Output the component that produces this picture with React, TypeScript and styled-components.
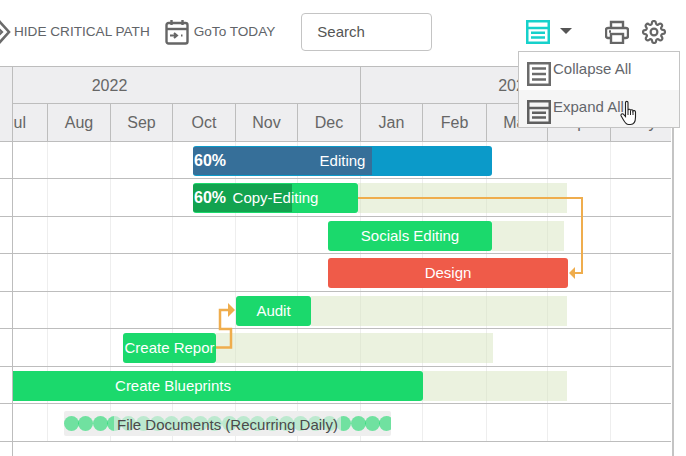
import React from 'react';
import styled, { createGlobalStyle } from 'styled-components';

const MONTHS = ['Jul', 'Aug', 'Sep', 'Oct', 'Nov', 'Dec', 'Jan', 'Feb', 'Mar', 'Apr', 'May'];
const COLUMNS = '35px 63px 62px 63px 62px 63px 62px 64px 61px 63px 61px';

const GlobalStyle = createGlobalStyle`
  html, body {
    margin: 0;
    padding: 0;
    background: #fff;
    overflow: hidden;
    font-family: "Liberation Sans", Arial, sans-serif;
  }
`;

const Page = styled.div`
  position: relative;
  width: 686px;
  height: 456px;
  overflow: hidden;
`;

const Toolbar = styled.div`
  display: flex;
  align-items: center;
  height: 64px;
  margin-left: -11px;
  color: #666;
`;

const ToolLabel = styled.span<{ $gap: number }>`
  font-size: 13.6px;
  margin: 0 15px 2px ${(p) => p.$gap}px;
  color: #616468;
  white-space: nowrap;
`;

const SearchBox = styled.div`
  box-sizing: border-box;
  display: flex;
  align-items: center;
  flex: none;
  width: 131px;
  height: 38px;
  margin-left: 11px;
  margin-right: 94px;
  padding: 0 0 2px 15px;
  border: 1px solid #c4c4c4;
  border-radius: 4px;
  font-size: 15px;
  color: #555;
`;

const Caret = styled.span`
  width: 0;
  height: 0;
  margin: 0 33px 2px 10px;
  border-left: 6px solid transparent;
  border-right: 6px solid transparent;
  border-top: 6px solid #555;
`;

const IconGap = styled.span`
  display: inline-flex;
  margin-right: 13px;
`;

const Chart = styled.div`
  position: relative;
  width: 674px;
  height: 390px;
  border-right: 2px solid #c4c4c4;
  box-sizing: border-box;
  margin-top: 2px;
`;

const HeaderBlock = styled.div`
  background: #eeeef0;
  border-top: 1px solid #bdbdbd;
  width: 671px;
  box-sizing: border-box;
  padding-left: 12px;
  color: #666;
`;

const YearRow = styled.div`
  display: grid;
  grid-template-columns: 347px 1fr;
  height: 36px;
  border-left: 1px solid #bdbdbd;
  border-bottom: 1px solid #bdbdbd;
`;

const YearCell = styled.div<{ $shift?: number }>`
  display: flex;
  align-items: center;
  justify-content: center;
  font-size: 16px;
  padding-top: 2px;
  padding-right: ${(p) => p.$shift || 0}px;

  & + & {
    border-left: 1px solid #bdbdbd;
  }
`;

const MonthRow = styled.div`
  display: grid;
  grid-template-columns: ${COLUMNS};
  height: 37px;
  border-left: 1px solid #bdbdbd;
`;

const MonthCell = styled.div`
  display: flex;
  align-items: center;
  justify-content: center;
  overflow: hidden;
  font-size: 16px;
  box-sizing: border-box;
  border-right: 1px solid #bdbdbd;

  &:first-child {
    justify-content: flex-end;
    padding-right: 21px;
  }
  &:last-child {
    border-right: 0;
  }
`;

const Rows = styled.div`
  position: relative;
  width: 671px;
  border-top: 1px solid #bdbdbd;
`;

const Row = styled.div`
  position: relative;
  box-sizing: border-box;
  height: 37px;
  padding-left: 12px;
  border-bottom: 1px solid #bdbdbd;

  &:nth-child(even) {
    height: 38px;
  }
`;

const RowGrid = styled.div`
  display: grid;
  grid-template-columns: ${COLUMNS};
  height: 100%;
  border-left: 1px solid #bdbdbd;
`;

const GridCell = styled.div`
  box-sizing: border-box;
  border-right: 1px solid #eeeeee;
  &:last-child {
    border-right: 0;
  }
`;

const LeftRule = styled.div`
  height: 15px;
  margin-left: 12px;
  border-left: 1px solid #bdbdbd;
`;

const Baseline = styled.div`
  position: absolute;
  top: 4px;
  height: 30px;
  background: rgba(214, 228, 188, 0.48);
`;

const Bar = styled.div<{ $color: string; $clipped?: boolean }>`
  position: absolute;
  top: 4px;
  box-sizing: border-box;
  height: 30px;
  display: flex;
  align-items: center;
  justify-content: center;
  border-radius: ${(p) => (p.$clipped ? '0 3px 3px 0' : '3px')};
  padding-right: ${(p) => (p.$clipped ? '90px' : '0')};
  background: ${(p) => p.$color};
  color: #fff;
  font-size: 15px;
  overflow: hidden;
  white-space: nowrap;
`;

const Progress = styled.div<{ $color: string }>`
  position: absolute;
  left: 0;
  top: 1px;
  bottom: 1px;
  background: ${(p) => p.$color};
  border-radius: 2px 0 0 2px;
`;

const Percent = styled.span`
  position: absolute;
  left: 1px;
  top: 6px;
  font-size: 16px;
  font-weight: 700;
  line-height: 18px;
`;

const BarText = styled.span`
  position: relative;
  top: -1px;
`;

const Recurring = styled.div`
  position: absolute;
  top: 7px;
  left: 64px;
  width: 327px;
  height: 25px;
  border-radius: 2px;
  background: #eeeeee;
  display: flex;
  align-items: center;
  overflow: hidden;
`;

const Dot = styled.span`
  flex: none;
  width: 15px;
  height: 15px;
  margin-right: -0.68px;
  border-radius: 50%;
  background: rgba(28, 217, 108, 0.6);
`;

const RecurringLabel = styled.span`
  position: absolute;
  left: 50px;
  top: 0;
  bottom: 0;
  display: flex;
  align-items: center;
  padding: 2px 3px 0;
  background: rgba(238, 238, 238, 0.6);
  font-size: 15px;
  color: #4a4a4a;
  white-space: nowrap;
`;

const Links = styled.svg`
  position: absolute;
  left: 0;
  top: 0;
  pointer-events: none;
`;

const Menu = styled.div`
  position: absolute;
  left: 518px;
  top: 51px;
  box-sizing: border-box;
  width: 162px;
  height: 77px;
  background: #fff;
  border: 1px solid #c4c4c4;
`;

const MenuItem = styled.div<{ $hover?: boolean }>`
  display: flex;
  height: 37.5px;
  padding: 10px 0 0 8px;
  box-sizing: border-box;
  gap: 2px;
  font-size: 15px;
  color: #63666b;
  background: ${(p) => (p.$hover ? '#f5f5f5' : 'transparent')};
`;

const MenuLabel = styled.span`
  margin-top: -2px;
  line-height: 18px;
`;

const CursorHand = styled.svg`
  position: absolute;
  left: 620px;
  top: 100px;
`;

// toolbar + menu icons, traced from the screenshot
const DiamondIcon = () => (
  <svg width="22" height="24" viewBox="0 0 22 24" fill="none" stroke="#6b6b6b" strokeWidth="2.6" style={{ flex: 'none' }}>
    <path d="M11 2 L20 12 L11 22 L2 12 Z" />
    <path d="M9 8 L13 12 L9 16" strokeWidth="2.2" />
  </svg>
);

const CalendarIcon = () => (
  <svg width="24" height="26" viewBox="0 0 24 26" fill="none" stroke="#666" strokeWidth="2.4" style={{ flex: 'none' }}>
    <rect x="1.5" y="4" width="21" height="20.5" rx="2" />
    <path d="M1.5 10 H22.5" />
    <path d="M6.5 1 V6 M17.5 1 V6" />
    <path d="M5 16.5 H11.5 M9 14 L12 16.5 L9 19" strokeWidth="2" />
    <path d="M16 16.5 H17.5" strokeWidth="2" />
  </svg>
);

const ExpandIcon = ({ color = '#16d1cb' }: { color?: string }) => (
  <svg width="24" height="24" viewBox="0 0 24 24" fill="none" stroke={color} strokeWidth="2.5" style={{ flex: 'none' }}>
    <rect x="1.25" y="1.25" width="21.5" height="21.5" />
    <path d="M1 8 H23" />
    <path d="M5 12.8 H19 M5 17.6 H19" />
  </svg>
);

const CollapseIcon = () => (
  <svg width="24" height="24" viewBox="0 0 24 24" fill="none" stroke="#6b6b6b" strokeWidth="2.5" style={{ flex: 'none' }}>
    <rect x="1.25" y="1.25" width="21.5" height="21.5" />
    <path d="M5 6.5 H19 M5 12 H19 M5 17.5 H19" />
  </svg>
);

const PrinterIcon = () => (
  <svg width="24" height="24" viewBox="0 0 24 24" fill="none" stroke="#666" strokeWidth="2.4">
    <path d="M6 8 V2 H18 V8" />
    <path d="M6 18 H3 A2 2 0 0 1 1 16 V10 A2 2 0 0 1 3 8 H21 A2 2 0 0 1 23 10 V16 A2 2 0 0 1 21 18 H18" />
    <rect x="6" y="14" width="12" height="9" />
    <path d="M4 11.5 H6" />
  </svg>
);

const GearIcon = () => (
  <svg width="24" height="24" viewBox="0 0 24 24" fill="none" stroke="#666" strokeWidth="2.2" strokeLinecap="round" strokeLinejoin="round">
    <circle cx="12" cy="12" r="3.4" />
    <path d="M19.4 15a1.65 1.65 0 0 0 .33 1.82l.06.06a2 2 0 1 1-2.83 2.83l-.06-.06a1.65 1.65 0 0 0-2.8 1.17V21a2 2 0 1 1-4 0v-.09a1.65 1.65 0 0 0-2.82-1.17l-.06.06a2 2 0 1 1-2.83-2.83l.06-.06a1.65 1.65 0 0 0-1.17-2.8H3a2 2 0 1 1 0-4h.09A1.65 1.65 0 0 0 4.26 7.3l-.06-.06a2 2 0 1 1 2.83-2.83l.06.06a1.65 1.65 0 0 0 2.8-1.17V3a2 2 0 1 1 4 0v.09a1.65 1.65 0 0 0 2.82 1.17l.06-.06a2 2 0 1 1 2.83 2.83l-.06.06a1.65 1.65 0 0 0 1.17 2.8H21a2 2 0 1 1 0 4h-.09a1.65 1.65 0 0 0-1.51 1z" />
  </svg>
);

type Task = {
  left: number;
  width: number;
  color: string;
  label: string;
  base?: number;
  progress?: { width: number; color: string };
  clipped?: boolean;
};

const TASKS: Task[] = [
  { left: 193, width: 299, color: '#0b9ac9', label: 'Editing', progress: { width: 179, color: '#366f99' } },
  { left: 193, width: 165, color: '#1bd96c', label: 'Copy-Editing', base: 567, progress: { width: 99, color: '#12a34f' } },
  { left: 328, width: 164, color: '#1bd96c', label: 'Socials Editing', base: 564 },
  { left: 328, width: 240, color: '#ef5b49', label: 'Design' },
  { left: 236, width: 75, color: '#1bd96c', label: 'Audit', base: 567 },
  { left: 123, width: 93, color: '#1bd96c', label: 'Create Repor', base: 493 },
  { left: 13, width: 410, color: '#1bd96c', label: 'Create Blueprints', base: 567, clipped: true },
];

const TaskRow = ({ task }: { task: Task }) => (
  <Row>
    <RowGrid>
      {MONTHS.map((m) => (
        <GridCell key={m} />
      ))}
    </RowGrid>
    {task.base && (
      <Baseline style={{ left: task.left + task.width, width: task.base - task.left - task.width }} />
    )}
    <Bar $color={task.color} $clipped={task.clipped} style={{ left: task.left, width: task.width }}>
      {task.progress && <Progress $color={task.progress.color} style={{ width: task.progress.width }} />}
      {task.progress && <Percent>60%</Percent>}
      <BarText>{task.label}</BarText>
    </Bar>
  </Row>
);

export default function App() {
  return (
    <Page>
      <GlobalStyle />
      <Toolbar>
        <DiamondIcon />
        <ToolLabel $gap={3}>HIDE CRITICAL PATH</ToolLabel>
        <CalendarIcon />
        <ToolLabel $gap={5}>GoTo TODAY</ToolLabel>
        <SearchBox>Search</SearchBox>
        <ExpandIcon />
        <Caret />
        <IconGap>
          <PrinterIcon />
        </IconGap>
        <GearIcon />
      </Toolbar>

      <Chart>
        <HeaderBlock>
          <YearRow>
            <YearCell $shift={154}>2022</YearCell>
            <YearCell>2023</YearCell>
          </YearRow>
          <MonthRow>
            {MONTHS.map((m) => (
              <MonthCell key={m}>{m}</MonthCell>
            ))}
          </MonthRow>
        </HeaderBlock>
        <Rows>
          {TASKS.map((t) => (
            <TaskRow key={t.label} task={t} />
          ))}
          <Row>
            <RowGrid>
              {MONTHS.map((m) => (
                <GridCell key={m} />
              ))}
            </RowGrid>
            <Recurring>
              {Array.from({ length: 23 }).map((_, i) => (
                <Dot key={i} />
              ))}
              <RecurringLabel>File Documents (Recurring Daily)</RecurringLabel>
            </Recurring>
          </Row>
          <LeftRule />
          <Links width="672" height="320">
            <path d="M358 56 H582 V131 H574" fill="none" stroke="#efad4d" strokeWidth="2" />
            <path d="M216 205.5 H231 V187 H220 V168 H229" fill="none" stroke="#efad4d" strokeWidth="2.5" />
            <path d="M569 131 L575 125 V137 Z" fill="#efad4d" />
            <path d="M235 168 L228 161 V175 Z" fill="#efad4d" />
          </Links>
        </Rows>
      </Chart>

      <Menu>
        <MenuItem>
          <CollapseIcon />
          <MenuLabel>Collapse All</MenuLabel>
        </MenuItem>
        <MenuItem $hover>
          <ExpandIcon color="#5f5f5f" />
          <MenuLabel>Expand All</MenuLabel>
        </MenuItem>
      </Menu>
      <CursorHand width="20" height="26" viewBox="0 0 20 26">
        <path
          d="M5.5 2.5 C5.5 1 8 1 8 2.5 V10 C8.5 8.8 10.5 9 10.5 10.5 C11 9.4 13 9.6 13 11 C13.5 10.2 15.5 10.4 15.5 12 V17 C15.5 21 14 24.5 10.5 24.5 H8.5 C6 24.5 5 22.5 3.5 20 L1.2 16 C0.4 14.4 2.4 13 3.6 14.4 L5.5 16.5 Z"
          fill="#fff"
          stroke="#222"
          strokeWidth="1.1"
        />
        <path d="M8 10 V15 M10.5 10.5 V15 M13 11 V15" stroke="#222" strokeWidth="1" fill="none" />
      </CursorHand>
    </Page>
  );
}
